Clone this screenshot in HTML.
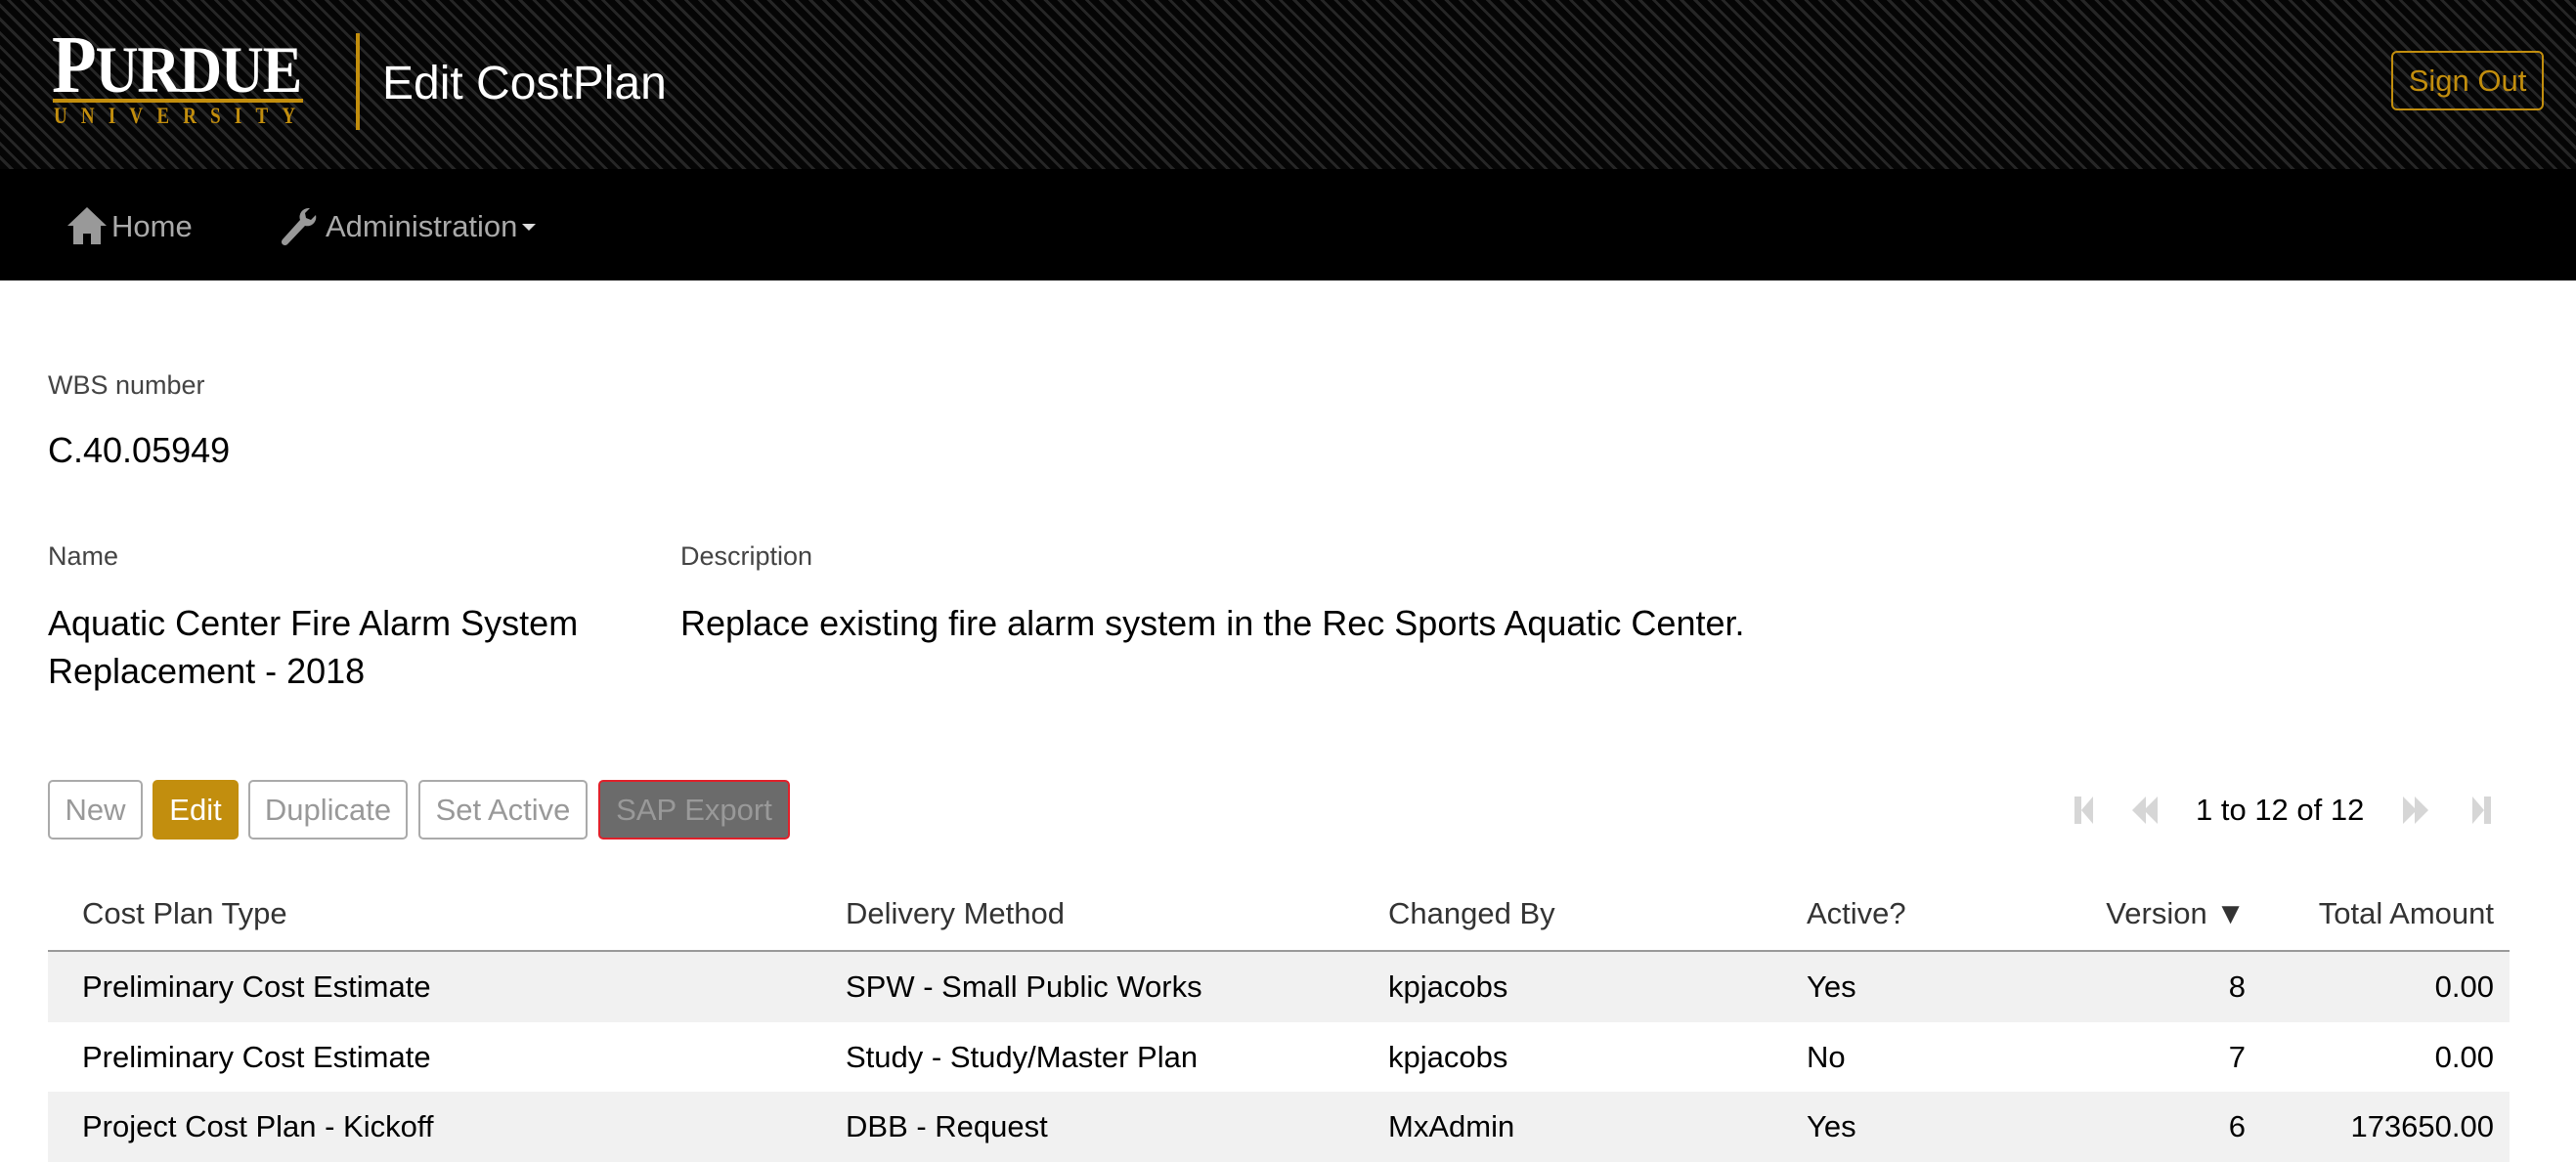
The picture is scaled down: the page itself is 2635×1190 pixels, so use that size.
<!DOCTYPE html>
<html><head><meta charset="utf-8"><style>
*{margin:0;padding:0;box-sizing:border-box}
body{width:2635px;height:1190px;overflow:hidden;background:#fff;font-family:"Liberation Sans",Arial,sans-serif;position:relative}
.a{position:absolute;white-space:nowrap}
#hdr{position:absolute;left:0;top:0;width:2635px;height:173px;background:#050505;background-image:repeating-linear-gradient(45deg,#050505 0 7px,#262626 7px 10px)}
#nav{position:absolute;left:0;top:173px;width:2635px;height:114px;background:#000}
.lbl{font-size:27px;color:#444}
.val{font-size:36px;color:#000}
.btn{position:absolute;top:798px;height:61px;border:2px solid #aaa;border-radius:5px;font-size:31px;color:#999;display:flex;align-items:center;justify-content:center}
.row{position:absolute;left:49px;width:2518px;height:72px}
.c{position:absolute;font-size:31px;color:#000;white-space:nowrap;line-height:36px}
.h{color:#333}
</style></head><body>
<div id="hdr"></div>
<div class="a" style="left:53px;top:25px;font-family:'Liberation Serif',serif;color:#fff;font-weight:bold;line-height:1;letter-spacing:-1px;transform:scale(1.17,1.3);transform-origin:0 0"><span style="font-size:64px">P</span><span style="font-size:52px">URDUE</span></div>
<div class="a" style="left:54px;top:101px;width:256px;height:4px;background:#c28e0e"></div>
<div class="a" style="left:55px;top:107px;font-family:'Liberation Serif',serif;color:#c28e0e;font-size:19px;letter-spacing:14.2px;font-weight:bold;transform:scaleY(1.2);transform-origin:0 0">UNIVERSITY</div>
<div class="a" style="left:364px;top:34px;width:4px;height:99px;background:#c28e0e"></div>
<div class="a" style="left:391px;top:58px;font-size:48px;color:#fff">Edit CostPlan</div>
<div class="a" style="left:2446px;top:52px;width:156px;height:61px;border:2px solid #c28e0e;border-radius:6px;color:#c28e0e;font-size:31px;display:flex;align-items:center;justify-content:center">Sign Out</div>
<div id="nav"></div>
<svg class="a" style="left:69px;top:212px" width="40" height="38" viewBox="0 0 40 38"><path d="M20 0L0 19h6v19h10V27h8v11h10V19h6z" fill="#999"/></svg>
<div class="a" style="left:114px;top:214px;font-size:31px;color:#aaa">Home</div>
<svg class="a" style="left:286px;top:212px" width="38" height="40" viewBox="0 0 38 40"><path d="M30 1a9 9 0 0 0-9 12L3 33a3.5 3.5 0 0 0 5 5l18-19a9 9 0 0 0 11-11l-5 5-5-2-1-5 5-5z" fill="#999"/></svg>
<div class="a" style="left:333px;top:214px;font-size:31px;color:#aaa">Administration</div>
<div class="a" style="left:534px;top:229px;width:0;height:0;border-left:7px solid transparent;border-right:7px solid transparent;border-top:7px solid #ddd"></div>

<div class="a lbl" style="left:49px;top:379px">WBS number</div>
<div class="a val" style="left:49px;top:440px">C.40.05949</div>
<div class="a lbl" style="left:49px;top:554px">Name</div>
<div class="a lbl" style="left:696px;top:554px">Description</div>
<div class="a val" style="left:49px;top:613px;line-height:49px">Aquatic Center Fire Alarm System<br>Replacement - 2018</div>
<div class="a val" style="left:696px;top:613px;line-height:49px">Replace existing fire alarm system in the Rec Sports Aquatic Center.</div>

<div class="btn" style="left:49px;width:97px">New</div>
<div class="btn" style="left:156px;width:88px;background:#c28e0e;border-color:#c28e0e;color:#fff">Edit</div>
<div class="btn" style="left:254px;width:163px">Duplicate</div>
<div class="btn" style="left:428px;width:173px">Set Active</div>
<div class="btn" style="left:612px;width:196px;background:#6b6b6b;border-color:#e0202a">SAP Export</div>

<svg class="a" style="left:2122px;top:814px" width="430" height="30" viewBox="0 0 430 30">
<g fill="#d6d6d6"><rect x="0" y="1" width="7" height="28"/><path d="M7 15L19 1v28z"/>
<path d="M59 15L73 1v28zM71 15L85 1v28z"/>
<path d="M350 15L336 1v28zM362 15L348 1v28z"/>
<path d="M419 15L407 1v28z"/><rect x="419" y="1" width="7" height="28"/></g></svg>
<div class="a" style="left:2246px;top:811px;font-size:31px;color:#000">1 to 12 of 12</div>

<div class="c h" style="left:84px;top:917px">Cost Plan Type</div>
<div class="c h" style="left:865px;top:917px">Delivery Method</div>
<div class="c h" style="left:1420px;top:917px">Changed By</div>
<div class="c h" style="left:1848px;top:917px">Active?</div>
<div class="c h" style="right:338px;top:917px">Version ▼</div>
<div class="c h" style="right:84px;top:917px">Total Amount</div>
<div class="a" style="left:49px;top:972px;width:2518px;height:2px;background:#999"></div>

<div class="row" style="top:974px;background:#f1f1f1"></div>
<div class="row" style="top:1117px;background:#f1f1f1"></div>

<div class="c" style="left:84px;top:992px">Preliminary Cost Estimate</div>
<div class="c" style="left:865px;top:992px">SPW - Small Public Works</div>
<div class="c" style="left:1420px;top:992px">kpjacobs</div>
<div class="c" style="left:1848px;top:992px">Yes</div>
<div class="c" style="right:338px;top:992px">8</div>
<div class="c" style="right:84px;top:992px">0.00</div>

<div class="c" style="left:84px;top:1064px">Preliminary Cost Estimate</div>
<div class="c" style="left:865px;top:1064px">Study - Study/Master Plan</div>
<div class="c" style="left:1420px;top:1064px">kpjacobs</div>
<div class="c" style="left:1848px;top:1064px">No</div>
<div class="c" style="right:338px;top:1064px">7</div>
<div class="c" style="right:84px;top:1064px">0.00</div>

<div class="c" style="left:84px;top:1135px">Project Cost Plan - Kickoff</div>
<div class="c" style="left:865px;top:1135px">DBB - Request</div>
<div class="c" style="left:1420px;top:1135px">MxAdmin</div>
<div class="c" style="left:1848px;top:1135px">Yes</div>
<div class="c" style="right:338px;top:1135px">6</div>
<div class="c" style="right:84px;top:1135px">173650.00</div>
</body></html>
